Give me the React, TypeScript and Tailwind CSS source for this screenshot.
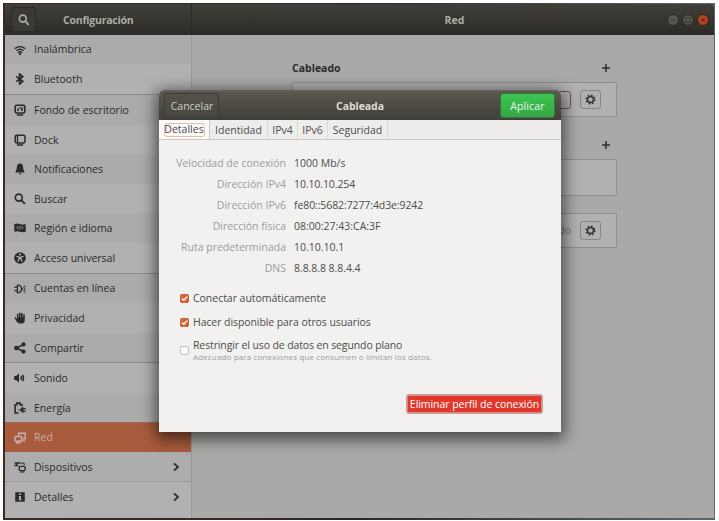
import React from "react";

type IconName =
  | "wifi" | "bluetooth" | "wallpaper" | "dock" | "bell" | "search" | "flag" | "access"
  | "plug" | "hand" | "share" | "sound" | "power" | "network" | "devices" | "info";

const S = { fill: "none", stroke: "currentColor" } as const;

function Icon({ name }: { name: IconName }) {
  const shapes: Record<IconName, React.ReactNode> = {
    wifi: (
      <g {...S} strokeWidth="1.4">
        <path d="M0.8 4.6Q6 0.6 11.2 4.6" />
        <path d="M2.4 6.8Q6 3.6 9.6 6.8" />
        <path d="M4 8.8Q6 6.8 8 8.8" />
        <circle cx="6" cy="10" r="0.9" fill="currentColor" strokeWidth="0.6" />
      </g>
    ),
    bluetooth: <path {...S} strokeWidth="1.7" d="M2.2 3.4L8.8 8.2L5.6 11V1L8.8 3.8L2.2 8.6" />,
    wallpaper: (
      <g>
        <rect {...S} strokeWidth="1.6" x="1.2" y="1.2" width="9.6" height="7.8" rx="1.6" />
        <path d="M2.8 10.2H9.2V11.7H2.8ZM3.2 4.6H4.8V7H3.2ZM5.4 3.2H6.6V5H5.4ZM7.3 3.2H8.8V7H7.3Z" fill="currentColor" />
      </g>
    ),
    dock: (
      <g>
        <rect {...S} strokeWidth="1.5" x="1.2" y="1.2" width="9.8" height="7.8" rx="1.4" />
        <path d="M3.5 1V9M3 11H9.2" {...S} strokeWidth="1.4" />
      </g>
    ),
    bell: <path fill="currentColor" d="M6 0.6C3.6 0.6 2.9 2.4 2.8 4.6C2.7 6.8 2.2 7.8 1.2 9.4H10.8C9.8 7.8 9.3 6.8 9.2 4.6C9.1 2.4 8.4 0.6 6 0.6ZM4.9 10.2H7.7Q7.4 11.4 6.3 11.4T4.9 10.2Z" />,
    search: (
      <g {...S} strokeWidth="1.6">
        <circle cx="4.8" cy="4.6" r="3.5" />
        <path d="M7.2 7.1L10.9 10.8" strokeWidth="1.9" />
      </g>
    ),
    flag: (
      <g>
        <path fill="currentColor" d="M0.3 2Q3.2 1 6 2T11.7 2V9.7Q8.8 10.6 6 9.7T0.3 9.7Z" />
        <g fill="none" stroke="#aaaaaa" strokeWidth="0.6">
          <circle cx="6" cy="5.7" r="1.4" />
          <path d="M3.6 4.2Q2.7 5.7 3.6 7.2M8.4 4.2Q9.3 5.7 8.4 7.2" />
        </g>
      </g>
    ),
    access: (
      <g>
        <circle cx="6" cy="6" r="5.8" fill="currentColor" />
        <circle cx="6" cy="2.5" r="1.1" fill="#b1b1b1" />
        <path d="M2.4 4.4L5 5V7L3.8 9.8M9.6 4.4L7 5V7L8.2 9.8M5 5.6H7M6 5V7.4" fill="none" stroke="#b1b1b1" strokeWidth="1.2" />
      </g>
    ),
    plug: (
      <g {...S} strokeWidth="1.3">
        <path d="M0.4 4.4H3M0.4 7.6H3M3.4 1.8V10.2M3.4 2.2Q7.6 2.4 7.6 6T3.4 9.8M7.6 6H9.2" />
        <path d="M11.6 3Q9.6 2.8 9.8 4.2T11.2 5.6M11.6 6.6Q9.6 6.6 9.8 8T11.6 9.2" strokeWidth="0.9" />
      </g>
    ),
    hand: (
      <path fill="currentColor" d="M0.4 5.8L1.6 5L2.9 7V1.8H4.5V5.6H5V0.7H6.6V5.6H7.1V1H8.7V5.6H9.2V2.4H10.8V8.3Q10.6 11.6 7.6 11.6H5.8Q3.8 11.6 2.8 9.8Z" />
    ),
    share: (
      <g>
        <path d="M9.6 2.6L2.4 6L9.6 9.5" {...S} strokeWidth="1.6" />
        <g fill="currentColor"><circle cx="9.5" cy="2.4" r="2.1" /><circle cx="2.3" cy="6" r="2.2" /><circle cx="9.5" cy="9.6" r="2.1" /></g>
      </g>
    ),
    sound: (
      <g>
        <path fill="currentColor" d="M0.2 4.1H2.1L5 1.6V10.4L2.1 7.9H0.2Z" />
        <path d="M6.9 4.2Q7.9 6 6.9 7.8M8.5 2.9Q10.5 6 8.5 9.1" {...S} strokeWidth="1.5" />
      </g>
    ),
    power: (
      <g>
        <path d="M4.6 11H1.1V2.7H2.9V1.1H6.2V2.7H8V4.2" {...S} strokeWidth="1.6" />
        <path d="M4.6 7.3H6.6Q7.2 5 9.4 5V6.1H11.7V7.3H9.4V8.6H11.7V9.8H9.4V10.9Q7.2 10.9 6.6 8.6H4.6Z" fill="currentColor" />
      </g>
    ),
    network: (
      <g>
        <path d="M4.6 3.8V1.3H11.2V6.6H8.8M8.6 9H10.2V6.6" {...S} strokeWidth="1.4" />
        <rect {...S} strokeWidth="1.5" x="1" y="4.4" width="6.6" height="4.6" rx="0.6" />
        <path d="M1.8 10H6.8V11.5H1.8Z" fill="currentColor" />
      </g>
    ),
    devices: (
      <g>
        <path d="M0.6 1.9H6.4M2.6 1.9V4.4M0.4 4.6H4.4" {...S} strokeWidth="1.5" />
        <path d="M7 2.2H10.2V4" {...S} strokeWidth="1" />
        <rect {...S} strokeWidth="1.4" x="5.2" y="5.4" width="6" height="4.2" rx="1" />
        <path d="M6.2 11H10.4" {...S} strokeWidth="1.1" />
      </g>
    ),
    info: (
      <g>
        <rect x="1.2" y="1.2" width="9.6" height="9.6" rx="0.6" fill="currentColor" />
        <path d="M5.1 2.6H7V4H5.1ZM4.6 4.9H7V8.3H7.5V9.2H4.6V8.3H5.1V5.8H4.6Z" fill="#b1b1b1" />
      </g>
    ),
  };
  return <svg viewBox="0 0 12 12" className="h-3 w-3 shrink-0">{shapes[name]}</svg>;
}

type Item = { icon: IconName; label: string; row: string; arrow?: boolean };

const items: Item[] = [
  { icon: "wifi", label: "Inalámbrica", row: "h-[29px] bg-[#ababab]" },
  { icon: "bluetooth", label: "Bluetooth", row: "h-[31px] bg-[#b1b1b1] border-b border-[#8c8c8c]" },
  { icon: "wallpaper", label: "Fondo de escritorio", row: "h-[30px] bg-[#ababab]" },
  { icon: "dock", label: "Dock", row: "h-[29px] bg-[#b1b1b1] pt-px" },
  { icon: "bell", label: "Notificaciones", row: "h-[30px] bg-[#ababab]" },
  { icon: "search", label: "Buscar", row: "h-[29px] bg-[#b1b1b1] pt-px" },
  { icon: "flag", label: "Región e idioma", row: "h-[30px] bg-[#ababab]" },
  { icon: "access", label: "Acceso universal", row: "h-[31px] bg-[#b1b1b1] border-b border-[#8c8c8c]" },
  { icon: "plug", label: "Cuentas en línea", row: "h-[29px] bg-[#ababab]" },
  { icon: "hand", label: "Privacidad", row: "h-[30px] bg-[#b1b1b1]" },
  { icon: "share", label: "Compartir", row: "h-[30px] bg-[#ababab] border-b border-[#8c8c8c] pt-px" },
  { icon: "sound", label: "Sonido", row: "h-[30px] bg-[#b1b1b1]" },
  { icon: "power", label: "Energía", row: "h-[29px] bg-[#ababab] pt-px" },
  { icon: "network", label: "Red", row: "h-[30px] bg-[#a95b3e] border-t border-[#9b6a57] text-[#c4b1a9]" },
  { icon: "devices", label: "Dispositivos", row: "h-[30px] bg-[#adadad] border-b border-[#9a9a9a] pt-px", arrow: true },
  { icon: "info", label: "Detalles", row: "h-[30px] bg-[#b1b1b1]", arrow: true },
];

function SidebarRow({ item }: { item: Item }) {
  return (
    <div className={`flex shrink-0 items-center pl-[9px] pr-[11px] ${item.row}`}>
      <Icon name={item.icon} />
      <span className="ml-2 flex-1">{item.label}</span>
      {item.arrow && (
        <svg viewBox="0 0 8 10" className="h-2.5 w-2" fill="none" stroke="currentColor" strokeWidth="1.7">
          <path d="M2 1.4L6 5L2 8.6" />
        </svg>
      )}
    </div>
  );
}

function GearButton() {
  return (
    <div className="flex h-[19px] w-[21px] items-center justify-center rounded-[3px] border border-[#868686] bg-[#b0b0b0]">
      <svg viewBox="-6 -6 12 12" className="h-[11px] w-[11px]" stroke="#303030" fill="none">
        <circle r="3.3" strokeWidth="1.6" />
        <circle r="4.7" strokeWidth="1.6" strokeDasharray="1.75 1.94" />
      </svg>
    </div>
  );
}

function Plus() {
  return (
    <svg viewBox="0 0 8 8" className="h-2 w-2" stroke="#2e2e2e" strokeWidth="1.5">
      <path d="M4 0V8M0 4H8" />
    </svg>
  );
}

const details = [
  { label: "Velocidad de conexión", value: "1000 Mb/s", spacing: "tracking-normal" },
  { label: "Dirección IPv4", value: "10.10.10.254", spacing: "tracking-[-0.1px]" },
  { label: "Dirección IPv6", value: "fe80::5682:7277:4d3e:9242", spacing: "tracking-[-0.1px]" },
  { label: "Dirección física", value: "08:00:27:43:CA:3F", spacing: "tracking-normal" },
  { label: "Ruta predeterminada", value: "10.10.10.1", spacing: "tracking-normal" },
  { label: "DNS", value: "8.8.8.8 8.8.4.4", spacing: "tracking-[-0.05px]" },
];

const tabs = [
  { label: "Identidad", cls: "w-[58px]" },
  { label: "IPv4", cls: "w-[30px]" },
  { label: "IPv6", cls: "w-[30px]" },
  { label: "Seguridad", cls: "w-[60px]" },
];

function Check({ on }: { on: boolean }) {
  return on ? (
    <svg viewBox="0 0 9 9" className="h-[9px] w-[9px] shrink-0">
      <rect x="0.4" y="0.4" width="8.2" height="8.2" rx="1.6" fill="#dc6236" stroke="#b5502d" strokeWidth="0.8" />
      <path d="M2 4.5L3.8 6.3L7.2 2.6" fill="none" stroke="#fff" strokeWidth="1.4" />
    </svg>
  ) : (
    <span className="h-[9px] w-[9px] shrink-0 rounded-[2px] border border-[#c2c0bd] bg-[#fbfbfa]" />
  );
}

function Dialog() {
  return (
    <div className="absolute left-[159px] top-[90px] h-[342px] w-[402px] rounded-t-[5px] shadow-[0_4px_16px_3px_rgba(0,0,0,0.6)]">
      <div className="flex h-full flex-col overflow-hidden rounded-t-[5px] bg-[#f2f1ef] text-[#4e4c49]">
        <div className="flex h-[30px] shrink-0 items-center justify-between border-t border-[#656259] bg-linear-to-b from-[#5c594f] to-[#3f3e38] pl-[5px] pr-1.5">
          <div className="flex h-[25px] w-[55px] items-center justify-center rounded-[3px] border border-[#3c3a35] bg-linear-to-b from-[#545249] to-[#474640] pl-px pt-px text-[#cfccc3]">Cancelar</div>
          <span className="pl-px pt-px font-bold tracking-[-0.05px] text-[#dfdbd2]">Cableada</span>
          <div className="flex h-[25px] w-[55px] items-center justify-center rounded-[3px] border border-[#2e7a3b] bg-linear-to-b from-[#3ac650] to-[#38a447] pt-px tracking-[0.1px] text-[#e8f6ea]">Aplicar</div>
        </div>
        <div className="flex h-5 shrink-0 border-b border-[#cbc9c6] bg-[#eeedeb]">
          <div className="flex w-[51px] items-center justify-center border-r border-[#cbc9c6] bg-[#fafaf9]">
            <span className="flex h-[14px] w-[41px] items-center justify-center rounded-[3px] border border-[#f0b9a4]">Detalles</span>
          </div>
          {tabs.map((t) => (
            <div key={t.label} className={`flex items-center justify-center border-r border-[#dddbd8] pt-px ${t.cls}`}>{t.label}</div>
          ))}
        </div>
        <div className="grid grid-cols-[127px_1fr] gap-x-2 pt-[13px]">
          {details.map((d) => (
            <React.Fragment key={d.label}>
              <span className="h-[21px] text-right leading-[21px] text-[#9d9b97]">{d.label}</span>
              <span className={`h-[21px] leading-[21px] ${d.spacing}`}>{d.value}</span>
            </React.Fragment>
          ))}
        </div>
        <div className="flex flex-col pl-[21px] pt-[7px]">
          <div className="flex h-6 items-center gap-1 tracking-[-0.03px]"><Check on />Conectar automáticamente</div>
          <div className="flex h-6 items-center gap-1 tracking-[-0.08px]"><Check on />Hacer disponible para otros usuarios</div>
          <div className="flex h-8 items-center gap-1">
            <Check on={false} />
            <div>
              <div className="h-3 leading-3 tracking-[-0.12px]">Restringir el uso de datos en segundo plano</div>
              <div className="h-[11px] text-[8px] leading-[11px] tracking-[0.14px] text-[#9d9b97]">Adecuado para conexiones que consumen o limitan los datos.</div>
            </div>
          </div>
        </div>
        <div className="mt-auto flex justify-end pb-[18px] pr-[18px]">
          <div className="flex h-5 w-[137px] items-center justify-center rounded-[3px] border border-[#b5aaa7] bg-[#df382c] tracking-[-0.05px] text-white shadow-[inset_0_0_0_1px_#e9837a]">Eliminar perfil de conexión</div>
        </div>
      </div>
    </div>
  );
}

export default function App() {
  return (
    <div className="relative h-[521px] w-[719px] overflow-hidden bg-white pl-[3px] pt-[3px] font-['Open_Sans','Noto_Sans',sans-serif] text-[10.5px] leading-none whitespace-nowrap text-[#2a2a2a]">
      <div className="h-[517px] w-[712px] bg-linear-to-r from-[#42291f] via-[#2c2827] to-[#55696c] pl-[2px] pt-px">
        <div className="flex h-[514px] w-[709px] flex-col overflow-hidden rounded-t-[4px] bg-[#a9a9a7]">
          <div className="flex h-[31px] shrink-0 items-center bg-linear-to-b from-[#413f39] to-[#2c2b27] text-[#aeaba3]">
            <div className="flex h-full w-[187px] items-center border-r border-[#2b2a26] pl-1.5">
              <div className="flex h-[25px] w-[25px] items-center justify-center rounded-[3px] border border-[#2b2a26] bg-[#3a3933]"><Icon name="search" /></div>
              <span className="ml-[27px] pt-px font-bold tracking-[-0.22px]">Configuración</span>
            </div>
            <div className="flex flex-1 items-center pr-1">
              <span className="flex-1 pl-[51px] pt-px text-center font-bold">Red</span>
              <div className="flex gap-[2px]">
                <svg viewBox="0 0 12 12" className="h-3 w-3.5"><circle cx="6" cy="6" r="5.5" fill="#5a5852" stroke="#282723" /><path d="M3.5 6H8.5" stroke="#34332e" /></svg>
                <svg viewBox="0 0 12 12" className="h-3 w-3"><circle cx="6" cy="6" r="5.5" fill="#5a5852" stroke="#282723" /><rect x="3.7" y="3.7" width="4.6" height="4.6" fill="none" stroke="#34332e" /></svg>
                <svg viewBox="0 0 12 12" className="h-3 w-3.5"><circle cx="6" cy="6" r="5.5" fill="#b9451f" stroke="#2e241e" /><path d="M4 4L8 8M8 4L4 8" stroke="#4a2415" /></svg>
              </div>
            </div>
          </div>
          <div className="flex min-h-0 flex-1">
            <aside className="flex w-[187px] shrink-0 flex-col border-r border-[#999997] bg-[#b1b1b1]">
              {items.map((i) => <SidebarRow key={i.label} item={i} />)}
            </aside>
            <main className="flex w-[425px] flex-col pl-[100px] pt-[26px]">
              <div className="flex h-[14px] items-center justify-between pr-[7px]"><span className="font-bold">Cableado</span><Plus /></div>
              <div className="mt-[7px] flex h-[35px] items-center justify-end gap-[9px] rounded-[2px] border border-[#8f8f8e] bg-[#b1b1b1] pr-[15px]">
                <div className="h-[18px] w-12 rounded-[3px] border border-[#795047] bg-[#b1b1b1]" />
                <GearButton />
              </div>
              <div className="mt-[21px] flex h-[14px] items-center justify-end pr-[7px]"><Plus /></div>
              <div className="mt-[7px] h-[37px] rounded-[2px] border border-[#8f8f8e] bg-[#b1b1b1]" />
              <div className="mt-[17px] flex h-[35px] items-center justify-end gap-[9px] rounded-[2px] border border-[#8f8f8e] bg-[#b1b1b1] pr-[15px] text-[#737372]">
                Apagado
                <GearButton />
              </div>
            </main>
          </div>
        </div>
      </div>
      <Dialog />
    </div>
  );
}
